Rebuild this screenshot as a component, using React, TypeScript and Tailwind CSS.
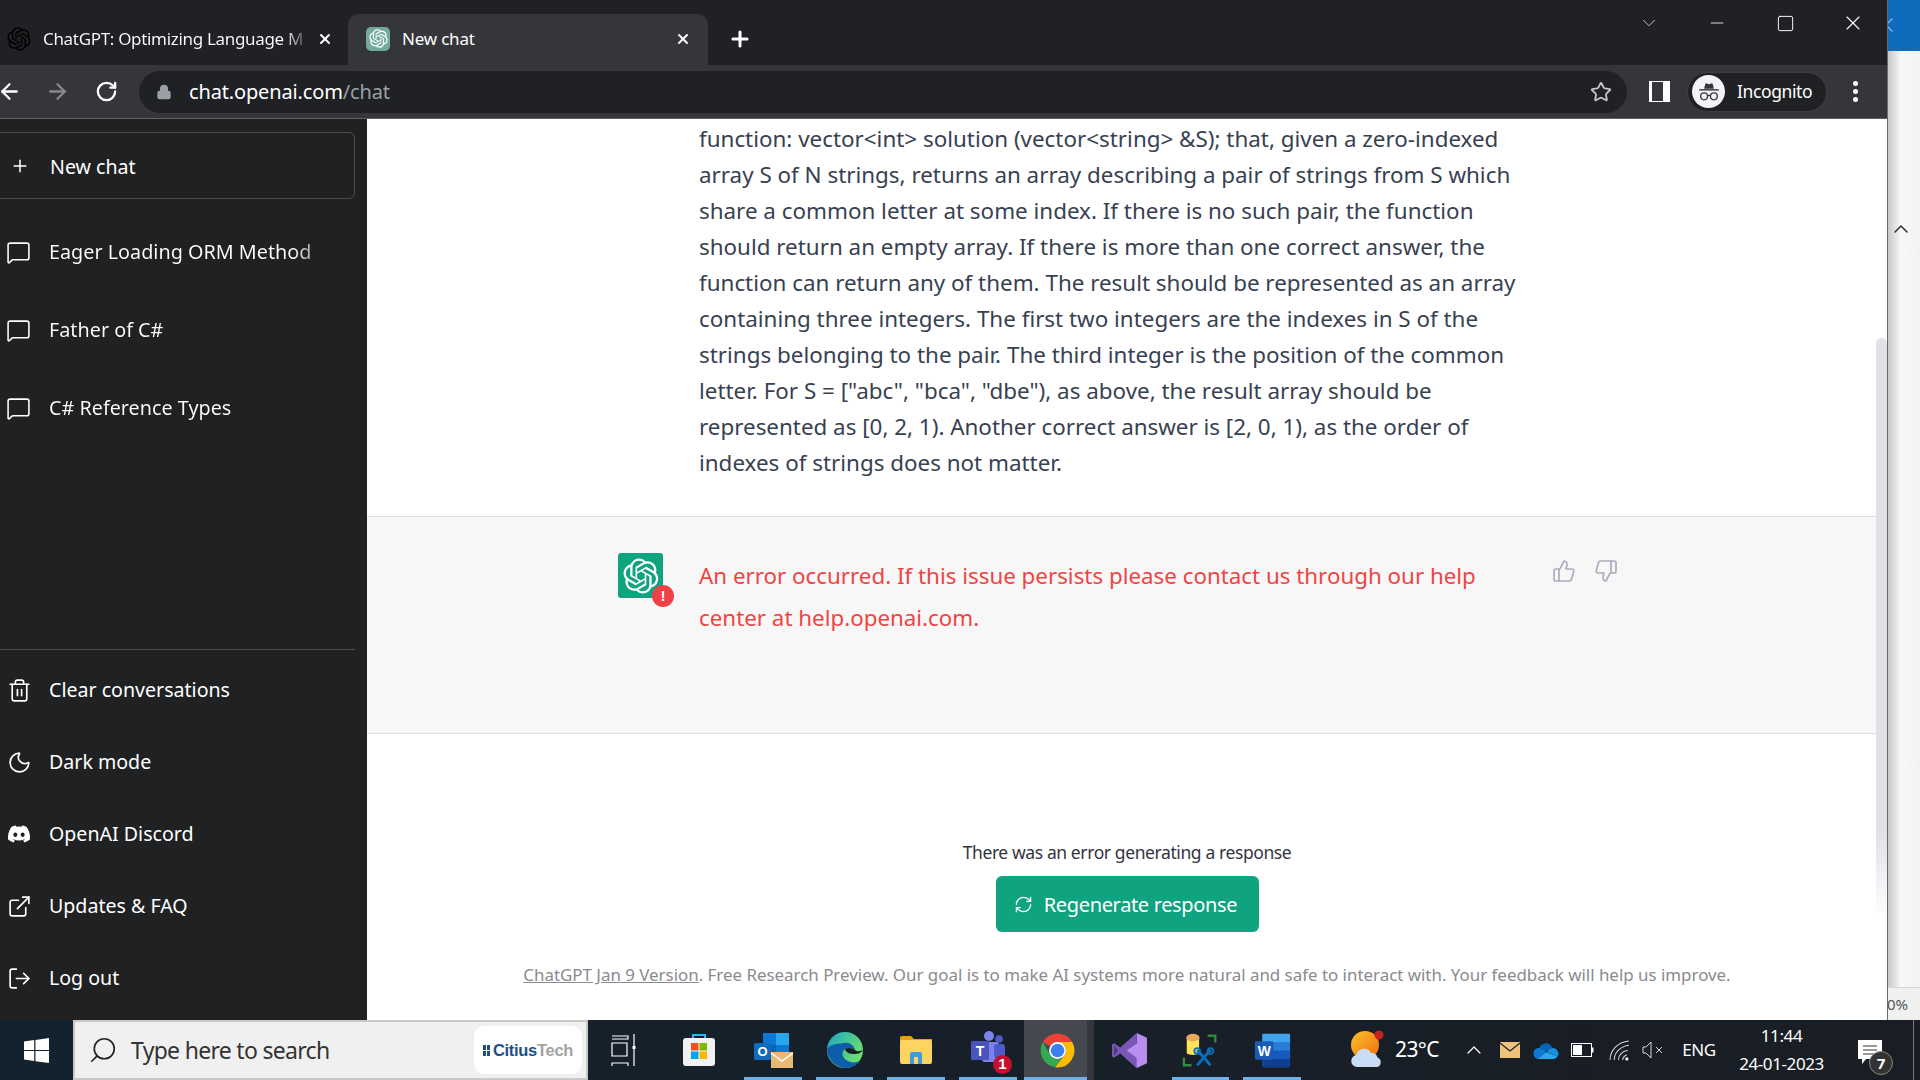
import { ReactNode } from 'react';
import {
  ArrowLeft,
  ArrowRight,
  ChevronDown,
  ChevronUp,
  ExternalLink,
  Lock,
  LogOut,
  MessageSquare,
  Minus,
  Moon,
  Plus,
  RefreshCw,
  RotateCw,
  Search,
  Square,
  Star,
  ThumbsDown,
  ThumbsUp,
  Trash2,
  X,
} from 'lucide-react';
import { FaDiscord } from 'react-icons/fa';

const ui = "font-['Noto_Sans',sans-serif]";

const promptLines = [
  'function: vector<int> solution (vector<string> &S); that, given a zero-indexed',
  'array S of N strings, returns an array describing a pair of strings from S which',
  'share a common letter at some index. If there is no such pair, the function',
  'should return an empty array. If there is more than one correct answer, the',
  'function can return any of them. The result should be represented as an array',
  'containing three integers. The first two integers are the indexes in S of the',
  'strings belonging to the pair. The third integer is the position of the common',
  'letter. For S = ["abc", "bca", "dbe"), as above, the result array should be',
  'represented as [0, 2, 1). Another correct answer is [2, 0, 1), as the order of',
  'indexes of strings does not matter.',
];

const chats = ['Eager Loading ORM Method', 'Father of C#', 'C# Reference Types'];

function OpenAILogo({ className }: { className?: string }) {
  return (
    <svg viewBox="0 0 41 41" fill="currentColor" className={className}>
      <path d="M37.5324 16.8707C37.9808 15.5241 38.1363 14.0974 37.9886 12.6859C37.8409 11.2744 37.3934 9.91076 36.676 8.68622C35.6126 6.83404 33.9882 5.3676 32.0373 4.4985C30.0864 3.62941 27.9098 3.40259 25.8215 3.85078C24.8796 2.7893 23.7219 1.94125 22.4257 1.36341C21.1295 0.785575 19.7249 0.491269 18.3058 0.500197C16.1708 0.495044 14.0893 1.16803 12.3614 2.42214C10.6335 3.67624 9.34853 5.44666 8.6917 7.47815C7.30085 7.76286 5.98686 8.3414 4.8377 9.17505C3.68854 10.0087 2.73073 11.0782 2.02839 12.312C0.956464 14.1591 0.498905 16.2988 0.721698 18.4228C0.944492 20.5467 1.83612 22.5449 3.268 24.1293C2.81966 25.4759 2.66413 26.9026 2.81182 28.3141C2.95951 29.7256 3.40701 31.0892 4.12437 32.3138C5.18791 34.1659 6.8123 35.6322 8.76321 36.5013C10.7141 37.3704 12.8907 37.5973 14.9789 37.1492C15.9208 38.2107 17.0786 39.0587 18.3747 39.6366C19.6709 40.2144 21.0755 40.5087 22.4946 40.4998C24.6307 40.5054 26.7133 39.8321 28.4418 38.5772C30.1704 37.3223 31.4556 35.5506 32.1119 33.5179C33.5027 33.2332 34.8167 32.6547 35.9659 31.821C37.115 30.9874 38.0728 29.9178 38.7752 28.684C39.8458 26.8371 40.3023 24.6979 40.0789 22.5748C39.8556 20.4517 38.9639 18.4544 37.5324 16.8707ZM22.4978 37.8849C20.7443 37.8874 19.0459 37.2733 17.6994 36.1501C17.7601 36.117 17.8666 36.0586 17.936 36.0161L25.9004 31.4156C26.1003 31.3019 26.2663 31.137 26.3813 30.9378C26.4964 30.7386 26.5563 30.5124 26.5549 30.2825V19.0542L29.9213 20.998C29.9389 21.0068 29.9541 21.0198 29.9656 21.0359C29.977 21.052 29.9842 21.0707 29.9867 21.0902V30.3889C29.9842 32.375 29.1946 34.2791 27.7909 35.6841C26.3872 37.0892 24.4838 37.8806 22.4978 37.8849ZM6.39227 31.0064C5.51397 29.4888 5.19742 27.7107 5.49804 25.9832C5.55718 26.0187 5.66048 26.0818 5.73461 26.1244L13.699 30.7248C13.8975 30.8408 14.1233 30.902 14.3532 30.902C14.583 30.902 14.8088 30.8408 15.0073 30.7248L24.731 25.1103V28.9979C24.7321 29.0177 24.7283 29.0376 24.7199 29.0556C24.7115 29.0736 24.6988 29.0893 24.6829 29.1012L16.6317 33.7497C14.9096 34.7416 12.8643 35.0097 10.9447 34.4954C9.02506 33.9811 7.38785 32.7263 6.39227 31.0064ZM4.29707 13.6194C5.17156 12.0998 6.55279 10.9364 8.19885 10.3327C8.19885 10.4013 8.19491 10.5228 8.19491 10.6071V19.808C8.19351 20.0378 8.25334 20.2638 8.36823 20.4629C8.48312 20.6619 8.64893 20.8267 8.84863 20.9404L18.5723 26.5542L15.206 28.4979C15.1894 28.5089 15.1703 28.5155 15.1505 28.5173C15.1307 28.5191 15.1107 28.516 15.0924 28.5082L7.04046 23.8557C5.32135 22.8601 4.06716 21.2235 3.55289 19.3046C3.03862 17.3858 3.30624 15.3413 4.29707 13.6194ZM31.955 20.0556L22.2312 14.4411L25.5976 12.4981C25.6142 12.4872 25.6333 12.4805 25.6531 12.4787C25.6729 12.4769 25.6928 12.4801 25.7111 12.4879L33.7631 17.1364C34.9967 17.849 36.0017 18.8982 36.6606 20.1613C37.3194 21.4244 37.6047 22.849 37.4832 24.2684C37.3617 25.6878 36.8382 27.0432 35.9743 28.1759C35.1103 29.3086 33.9415 30.1717 32.6047 30.6641C32.6047 30.5947 32.6047 30.4733 32.6047 30.3889V21.188C32.6066 20.9586 32.5474 20.7328 32.4332 20.5338C32.319 20.3348 32.154 20.1698 31.955 20.0556ZM35.3055 15.0128C35.2464 14.9765 35.1431 14.9142 35.069 14.8717L27.1045 10.2712C26.906 10.1554 26.6803 10.0943 26.4504 10.0943C26.2206 10.0943 25.9948 10.1554 25.7963 10.2712L16.0726 15.8858V11.9982C16.0715 11.9783 16.0753 11.9585 16.0837 11.9405C16.0921 11.9225 16.1048 11.9068 16.1207 11.8949L24.1719 7.25025C25.4053 6.53903 26.8158 6.19376 28.2383 6.25482C29.6608 6.31589 31.0364 6.78077 32.2044 7.59508C33.3723 8.40939 34.2842 9.53945 34.8334 10.8531C35.3826 12.1667 35.5464 13.6095 35.3055 15.0128ZM14.2424 21.9419L10.8752 19.9981C10.8576 19.9893 10.8423 19.9763 10.8309 19.9602C10.8195 19.9441 10.8122 19.9254 10.8098 19.9058V10.6071C10.8107 9.18295 11.2173 7.78848 11.9819 6.58696C12.7466 5.38544 13.8377 4.42659 15.1275 3.82264C16.4173 3.21869 17.8524 2.99464 19.2649 3.1767C20.6775 3.35876 22.0089 3.93941 23.1034 4.85067C23.0427 4.88379 22.937 4.94215 22.8668 4.98473L14.9024 9.58517C14.7025 9.69878 14.5366 9.86356 14.4215 10.0626C14.3065 10.2616 14.2466 10.4877 14.2479 10.7175L14.2424 21.9419ZM16.071 17.9991L20.4018 15.4978L24.7325 17.9975V22.9985L20.4018 25.4983L16.071 22.9985V17.9991Z" />
    </svg>
  );
}

function IncognitoGlyph() {
  return (
    <svg viewBox="0 0 24 24" className="h-[26px] w-[26px]" fill="none" stroke="#35363a">
      <path d="M7.500 9 8.600 4.500c.2-.7.8-.7 1.300-.4l2.100.8 2.100-.8c.5-.3 1.100-.3 1.300.4L16.500 9z" fill="#35363a" stroke="none" />
      <path d="M3 10h18" strokeWidth="1.300" />
      <circle cx="7.500" cy="16" r="3.200" strokeWidth="1.200" />
      <circle cx="16.500" cy="16" r="3.200" strokeWidth="1.200" />
      <path d="M10.700 15.500c.8-.5 1.800-.5 2.600 0" strokeWidth="1.200" />
    </svg>
  );
}

function StoreIcon() {
  return (
    <svg viewBox="0 0 36 36" className="h-[36px] w-[36px]">
      <path d="M12 6V3h12v3" fill="none" stroke="#29b6f6" strokeWidth="2" />
      <rect x="2" y="6" width="32" height="28" rx="3" fill="#f2f2f2" />
      <rect x="10" y="11" width="7.500" height="7.500" fill="#f25022" />
      <rect x="18.500" y="11" width="7.500" height="7.500" fill="#7fba00" />
      <rect x="10" y="19.500" width="7.500" height="7.500" fill="#00a4ef" />
      <rect x="18.500" y="19.500" width="7.500" height="7.500" fill="#ffb900" />
    </svg>
  );
}

function OutlookIcon() {
  return (
    <svg viewBox="0 0 40 40" className="h-[40px] w-[40px]">
      <rect x="10" y="3" width="26" height="24" fill="#0a78d4" />
      <rect x="23" y="3" width="13" height="12" fill="#28a8ea" />
      <rect x="10" y="15" width="13" height="12" fill="#0364b8" />
      <rect x="1" y="13" width="17" height="17" rx="1.500" fill="#0f6cbd" />
      <text x="9.500" y="26" textAnchor="middle" fontSize="13" fontWeight="700" fill="#fff" fontFamily="Liberation Sans">O</text>
      <rect x="18" y="22" width="22" height="16" fill="#e9b872" />
      <path d="M18 23l11 8 11-8" fill="none" stroke="#fff" strokeWidth="1.500" />
    </svg>
  );
}

function EdgeIcon() {
  return (
    <svg viewBox="0 0 38 38" className="h-[38px] w-[38px]">
      <defs>
        <linearGradient id="edgeTop" x1="0" y1="0" x2="1" y2="0.6">
          <stop offset="0" stopColor="#1ca7c9" />
          <stop offset="1" stopColor="#6fe06a" />
        </linearGradient>
      </defs>
      <circle cx="19" cy="19" r="18" fill="url(#edgeTop)" />
      <path d="M1 19C3 32 13 37 20 37c6 0 11-3 14-7-4 2-10 2-14-1-4-3-5-8-1-11 3-2 8-1 10 1-1-5-6-8-11-7C9 13 2 14 1 19z" fill="#0f5da8" />
      <path d="M19 18c3-2 8-1 10 1 3 3 8 0 8-1-1 4-5 5-9 5-4 0-8-1-9-5z" fill="#1a1d24" />
    </svg>
  );
}

function FolderIcon() {
  return (
    <svg viewBox="0 0 36 36" className="h-[36px] w-[36px]">
      <path d="M2 6a2 2 0 0 1 2-2h9l3 3h18v6H2z" fill="#e5a50a" />
      <rect x="2" y="8" width="32" height="24" rx="2" fill="#fcd462" />
      <path d="M12 32V22a2 2 0 0 1 2-2h8a2 2 0 0 1 2 2v10h-4v-7h-4v7z" fill="#3d9be0" />
    </svg>
  );
}

function TeamsIcon() {
  return (
    <div className="relative ml-[4px] h-[40px] w-[40px]">
      <svg viewBox="0 0 40 40" className="h-[40px] w-[40px]">
        <circle cx="19" cy="6" r="5" fill="#7b83eb" />
        <circle cx="29" cy="9" r="3.800" fill="#5059c9" />
        <rect x="12" y="12" width="17" height="20" rx="3" fill="#7b83eb" />
        <rect x="24" y="14" width="11" height="14" rx="3" fill="#5059c9" />
        <rect x="1" y="11" width="18" height="19" rx="1.500" fill="#4b53bc" />
        <text x="10" y="26" textAnchor="middle" fontSize="14" fontWeight="700" fill="#fff" fontFamily="Liberation Sans">T</text>
      </svg>
      <div className="absolute right-[-2px] bottom-[-4px] flex h-[19px] w-[19px] items-center justify-center rounded-full bg-[#c50f2f] font-['Liberation_Sans',sans-serif] text-[15px] font-bold text-white">
        1
      </div>
    </div>
  );
}

function ChromeIcon() {
  return (
    <svg viewBox="0 0 48 48" className="h-[37px] w-[37px]">
      <path d="M5 13A22 22 0 0 1 43 13H24A11 11 0 0 0 14.500 18.500z" fill="#ea4335" />
      <path d="M5 13A22 22 0 0 0 21 45.800L30 33.500A11 11 0 0 1 14.500 29.500z" fill="#34a853" />
      <path d="M43 13H24A11 11 0 0 1 33.500 29.500L21 45.800A22 22 0 0 0 43 13z" fill="#fbbc04" />
      <circle cx="24" cy="24" r="11" fill="#fff" />
      <circle cx="24" cy="24" r="8.800" fill="#3b82f0" />
    </svg>
  );
}

function VisualStudioIcon() {
  return (
    <svg viewBox="0 0 36 36" className="h-[37px] w-[37px]">
      <path d="M25 1l10 4.500v25L25 35 10 21l15-10z" fill="#b98ef0" />
      <path d="M25 1 9 15 3 11l-2 1.500v11L3 25l6-4 16 14V25L15 18l10-7z" fill="#7a56b8" />
      <path d="M3 13v10l4-5z" fill="#4f3a80" />
    </svg>
  );
}

function DbToolIcon() {
  return (
    <svg viewBox="0 0 40 40" className="h-[38px] w-[38px]">
      <path d="M27 5h8v7" fill="none" stroke="#2e8b3d" strokeWidth="2.500" />
      <path d="M2 28v8h8" fill="none" stroke="#2e8b3d" strokeWidth="2.500" />
      <path d="M5 7v16c0 3 13 3 13 0V7z" fill="#ffe25a" />
      <ellipse cx="11.500" cy="7" rx="7" ry="4" fill="#e6a85a" />
      <path d="M16 20l14 16M30 20 16 36" stroke="#0b6fb8" strokeWidth="3" />
      <circle cx="16" cy="21" r="3" fill="none" stroke="#0b6fb8" strokeWidth="2" />
      <circle cx="30" cy="21" r="3" fill="none" stroke="#0b6fb8" strokeWidth="2" />
    </svg>
  );
}

function WordIcon() {
  return (
    <svg viewBox="0 0 40 38" className="h-[37px] w-[37px]">
      <rect x="9" y="1" width="30" height="36" rx="2" fill="#2b7cd3" />
      <rect x="9" y="1" width="30" height="9" fill="#41a5ee" />
      <rect x="9" y="19" width="30" height="9" fill="#185abd" />
      <rect x="9" y="28" width="30" height="9" fill="#103f91" />
      <rect x="1" y="9" width="20" height="20" rx="1.500" fill="#1a5bb8" />
      <text x="11" y="24.500" textAnchor="middle" fontSize="15" fontWeight="700" fill="#fff" fontFamily="Liberation Sans">W</text>
    </svg>
  );
}

function WeatherIcon() {
  return (
    <svg viewBox="0 0 34 40" className="h-[40px] w-[34px]">
      <defs>
        <linearGradient id="sun" x1="0" y1="0" x2="1" y2="1">
          <stop offset="0" stopColor="#fcc22e" />
          <stop offset="1" stopColor="#ef6c0c" />
        </linearGradient>
      </defs>
      <circle cx="15" cy="15" r="14" fill="url(#sun)" />
      <circle cx="29" cy="5" r="4.500" fill="#c4201c" />
      <path d="M7 37a6 6 0 0 1-.8-11.900A8 8 0 0 1 21 23a6 6 0 0 1 6.500 4.500A5 5 0 0 1 27 37z" fill="#c9dcf5" />
    </svg>
  );
}

function OneDriveIcon() {
  return (
    <svg viewBox="0 0 26 18" className="h-[18px] w-[26px]">
      <path d="M6 8a7 7 0 0 1 13-2 5 5 0 0 1 0 1L10 12z" fill="#0364b8" />
      <path d="M6 18a5.500 5.500 0 0 1-1-10.900c1-.2 2 0 3 .4l5 3L6 18z" fill="#0f78d4" />
      <path d="M20 7a5.500 5.500 0 0 1 4.500 8.500L14 11c1-2 3-4 6-4z" fill="#1490df" />
      <path d="M5 18l8-7 11.500 4.500A5 5 0 0 1 20 18z" fill="#28a8ea" />
    </svg>
  );
}

function ChromeButton({ children }: { children: ReactNode }) {
  return <div className="flex h-full w-[68px] items-center justify-center">{children}</div>;
}

function SideRow({ icon, label }: { icon: ReactNode; label: string }) {
  return (
    <div className="flex h-[72px] items-center pl-[6px]">
      <div className="flex w-[26px] shrink-0 justify-center text-white">{icon}</div>
      <span className="ml-[17px] text-[19.600px] text-white">{label}</span>
    </div>
  );
}

function TaskSlot({ width, icon, underline, active }: { width: string; icon: ReactNode; underline?: boolean; active?: boolean }) {
  return (
    <div className={`relative flex h-full shrink-0 items-center justify-center ${width} ${active ? 'border-r-[7px] border-[#33363c] bg-[#45484f] pl-[4px]' : ''}`}>
      {icon}
      {underline && <div className={`absolute bottom-0 h-[3px] bg-[#6cb2e8] ${active ? 'inset-x-0' : 'inset-x-[7px]'}`} />}
    </div>
  );
}

export default function App() {
  return (
    <div className={`flex h-[1080px] w-[1920px] flex-col overflow-hidden bg-white ${ui}`}>
      <div className="flex h-[1020px] shrink-0">
        {/* Browser window */}
        <div className="flex w-[1887px] shrink-0 flex-col">
          <div className="flex h-[65px] shrink-0 items-end bg-[#202124] text-white">
            <div className="flex h-[51px] w-[348px] shrink-0 items-center pb-[2px] pl-[7px]">
              <OpenAILogo className="h-[24px] w-[24px] text-black" />
              <span className="ml-[12px] w-[268px] truncate bg-gradient-to-r from-white from-[90%] to-transparent bg-clip-text text-[17px] tracking-[-0.32px] whitespace-nowrap text-transparent">
                ChatGPT: Optimizing Language M
              </span>
              <X className="ml-[6px] h-[16px] w-[16px]" strokeWidth={3} />
            </div>
            <div className="flex h-[51px] w-[360px] shrink-0 items-center rounded-t-[10px] bg-[#35363a] pb-[2px] pl-[18px]">
              <div className="flex h-[24px] w-[24px] items-center justify-center rounded-[5px] bg-[#74aa9c]">
                <OpenAILogo className="h-[19px] w-[19px] text-white" />
              </div>
              <span className="ml-[12px] w-[273px] text-[17px] tracking-[-0.2px]">New chat</span>
              <X className="h-[16px] w-[16px]" strokeWidth={3} />
            </div>
            <div className="flex h-[51px] w-[64px] shrink-0 items-center justify-center pb-[2px]">
              <Plus className="h-[24px] w-[24px]" strokeWidth={3} />
            </div>
            <div className="ml-auto flex h-[46px] self-start">
              <ChromeButton>
                <ChevronDown className="h-[22px] w-[22px] text-[#d0d0d0]" strokeWidth={1} />
              </ChromeButton>
              <ChromeButton>
                <Minus className="h-[20px] w-[20px]" strokeWidth={1} />
              </ChromeButton>
              <ChromeButton>
                <Square className="h-[19px] w-[19px]" strokeWidth={1.2} />
              </ChromeButton>
              <ChromeButton>
                <X className="h-[24px] w-[24px]" strokeWidth={1.1} />
              </ChromeButton>
            </div>
          </div>
          <div className="flex h-[54px] shrink-0 items-center border-b border-[#5f6063] bg-[#35363a] text-white">
            <ArrowLeft className="ml-[-3px] h-[25px] w-[25px] shrink-0" strokeWidth={2.2} />
            <ArrowRight className="ml-[23px] h-[25px] w-[25px] shrink-0 text-[#86888b]" strokeWidth={2.2} />
            <RotateCw className="ml-[25px] h-[23px] w-[23px] shrink-0" strokeWidth={2.4} />
            <div className="ml-[21px] flex h-[42px] w-[1488px] shrink-0 items-center rounded-full bg-[#202124] pl-[17px]">
              <Lock className="h-[16px] w-[16px] fill-[#9aa0a6] text-[#9aa0a6]" />
              <span className="ml-[17px] text-[20px] tracking-[-0.15px]">
                chat.openai.com<span className="text-[#9aa0a6]">/chat</span>
              </span>
              <Star className="mr-[15px] ml-auto h-[22px] w-[22px] text-[#c4c7c5]" strokeWidth={2} />
            </div>
            <div className="ml-[22px] h-[21px] w-[21px] shrink-0 border-y-[1px] border-r-[7px] border-l-[3px] border-white bg-[#35363a]" />
            <div className="ml-[17px] flex h-[40px] w-[140px] shrink-0 items-center rounded-full border border-[#3d3e42] bg-[#202124] pl-[4px]">
              <div className="flex h-[33px] w-[33px] items-center justify-center rounded-full bg-[#f1f3f4]">
                <IncognitoGlyph />
              </div>
              <span className="ml-[12px] text-[17.500px] tracking-[-0.4px]">Incognito</span>
            </div>
            <div className="ml-[26px] flex flex-col gap-[3px]">
              <div className="h-[5px] w-[5px] rounded-full bg-white" />
              <div className="h-[5px] w-[5px] rounded-full bg-white" />
              <div className="h-[5px] w-[5px] rounded-full bg-white" />
            </div>
          </div>

          <div className="flex min-h-0 flex-1">
            {/* Sidebar */}
            <aside className="flex w-[367px] shrink-0 flex-col bg-[#202123] pt-[13px] pb-[6px]">
              <div className="ml-[-10px] flex h-[67px] w-[365px] shrink-0 items-center rounded-md border border-white/20 pl-[19px] text-white">
                <Plus className="h-[20px] w-[20px]" strokeWidth={1.8} />
                <span className="ml-[20px] pt-[2px] text-[19.600px]">New chat</span>
              </div>
              <div className="mt-[14px] flex flex-col">
                {chats.map((title) => (
                  <div key={title} className="flex h-[78px] items-center pl-[6px]">
                    <MessageSquare className="h-[25px] w-[25px] shrink-0 text-white" strokeWidth={1.5} />
                    <span className="ml-[18px] w-[270px] truncate bg-gradient-to-r from-white from-[90%] to-[#8a8a8a] bg-clip-text text-[19.800px] whitespace-nowrap text-transparent">
                      {title}
                    </span>
                  </div>
                ))}
              </div>
              <div className="mt-auto w-[355px] border-t border-white/20 pt-[4px]">
                <SideRow icon={<Trash2 className="h-[25px] w-[25px]" strokeWidth={1.6} />} label="Clear conversations" />
                <SideRow icon={<Moon className="h-[25px] w-[25px]" strokeWidth={1.6} />} label="Dark mode" />
                <SideRow icon={<FaDiscord className="h-[24px] w-[24px]" />} label="OpenAI Discord" />
                <SideRow icon={<ExternalLink className="h-[25px] w-[25px]" strokeWidth={1.6} />} label="Updates & FAQ" />
                <SideRow icon={<LogOut className="h-[25px] w-[25px]" strokeWidth={1.6} />} label="Log out" />
              </div>
            </aside>

            {/* Conversation */}
            <main className="relative flex min-w-0 flex-1 flex-col bg-white">
              <div className="pt-[2px] pr-[10px] pb-[35px] pl-[332px] text-[22.400px] leading-[36px] text-[#374151]">
                {promptLines.map((line) => (
                  <div key={line} className="whitespace-nowrap">
                    {line}
                  </div>
                ))}
              </div>
              <div className="mr-[10px] flex h-[218px] shrink-0 border-y border-black/10 bg-[#f7f7f8] pt-[36px] pl-[251px]">
                <div className="relative h-[45px] w-[45px] shrink-0">
                  <div className="flex h-[45px] w-[45px] items-center justify-center rounded-[3px] bg-[#10a37f]">
                    <OpenAILogo className="h-[36px] w-[36px] text-white" />
                  </div>
                  <div className="absolute right-[-11px] bottom-[-9px] flex h-[22px] w-[22px] items-center justify-center rounded-full bg-[#ef4146] font-['Liberation_Sans',sans-serif] text-[14px] font-bold text-white">
                    !
                  </div>
                </div>
                <div className="mt-[2px] ml-[36px] w-[823px] text-[22.350px] leading-[42px] text-[#ef4444]">
                  <div className="whitespace-nowrap">An error occurred. If this issue persists please contact us through our help</div>
                  <div className="whitespace-nowrap">center at help.openai.com.</div>
                </div>
                <div className="mt-[6px] ml-[30px] flex gap-[18px] text-[#acacbe]">
                  <ThumbsUp className="h-[24px] w-[24px]" strokeWidth={1.7} />
                  <ThumbsDown className="h-[24px] w-[24px]" strokeWidth={1.7} />
                </div>
              </div>
              <div className="flex flex-col items-center">
                <div className="mt-[106px] text-[17.500px] leading-[24px] tracking-[-0.4px] text-[#343541]">There was an error generating a response</div>
                <div className="mt-[12px] flex h-[56px] w-[263px] items-center justify-center rounded-md bg-[#10a37f] pt-[1px] text-white">
                  <RefreshCw className="ml-[-3px] h-[19px] w-[19px]" strokeWidth={1.6} />
                  <span className="ml-[11px] text-[20px] tracking-[-0.35px]">Regenerate response</span>
                </div>
                <div className="mt-[33px] text-[16.900px] leading-[20px] whitespace-nowrap text-[#8a8a90]">
                  <span className="underline">ChatGPT Jan 9 Version</span>. Free Research Preview. Our goal is to make AI systems more natural and safe to interact with. Your feedback will help us improve.
                </div>
              </div>
              {/* scrollbar thumb */}
              <div className="absolute top-[219px] right-0 h-[582px] w-[11px] rounded-t-[6px] bg-gradient-to-b from-[#e0e1e9] from-[85%] to-white" />
            </main>
          </div>
        </div>

        {/* Sliver of the window behind */}
        <div className="flex min-w-0 flex-1 flex-col border-l border-[#6a6a6a] bg-gradient-to-r from-[#c8c8c8] from-0% via-[#f8f8f8] via-40% to-[#f2f2f2]">
          <div className="h-[51px] shrink-0 overflow-hidden bg-[#0f6cbd] text-[#8ec1ec]">
            <X className="ml-[-14px] mt-[13px] h-[24px] w-[24px]" strokeWidth={1.2} />
          </div>
          <ChevronUp className="mt-[166px] ml-[1px] h-[24px] w-[24px] text-[#333]" strokeWidth={1.5} />
          <div className="mt-auto flex h-[33px] items-center overflow-hidden border-t border-[#d5d5d5] bg-[#f0f0f0] text-[15px] text-[#555]">
            <span className="ml-[-1px]">0%</span>
          </div>
        </div>
      </div>

      {/* Taskbar */}
      <div className="flex h-[60px] shrink-0 items-center bg-gradient-to-r from-[#13222f] to-[#1a1d24] text-white">
        <div className="flex h-full w-[73px] shrink-0 items-center justify-center">
          <svg viewBox="0 0 24 24" className="h-[25px] w-[25px]" fill="#fff">
            <path d="M0 3.400 9.800 2v9.500H0zM11 1.800 24 0v11.500H11zM0 12.500h9.800V22L0 20.600zM11 12.500h13V24L11 22.200z" />
          </svg>
        </div>
        <div className="flex h-full w-[515px] shrink-0 items-center border-2 border-[#c8c8c8] bg-[#f0f0f0] pl-[13px] text-[#333]">
          <Search className="h-[30px] w-[30px] -scale-x-100 text-[#222]" strokeWidth={1.3} />
          <span className="ml-[13px] text-[23px] tracking-[-0.7px]">Type here to search</span>
          <div className="ml-auto mr-[4px] flex h-[48px] w-[108px] items-center justify-center rounded-[10px] bg-white font-['Liberation_Sans',sans-serif] text-[16.500px] font-bold tracking-[-0.3px]">
            <div className="mr-[3px] grid grid-cols-2 gap-[1px]">
              <div className="h-[5px] w-[3px] bg-[#1d4f85]" />
              <div className="h-[5px] w-[3px] bg-[#1d4f85]" />
              <div className="h-[5px] w-[3px] bg-[#1d4f85]" />
              <div className="h-[5px] w-[3px] bg-[#1d4f85]" />
            </div>
            <span className="text-[#1d4f85]">Citius</span>
            <span className="text-[#a3a3a3]">Tech</span>
          </div>
        </div>
        <TaskSlot
          width="w-[72px]"
          icon={
            <svg viewBox="0 0 26 34" className="h-[34px] w-[26px]" fill="none" stroke="#fff" strokeWidth="1.200">
              <path d="M1 3h16v3H1M1 10h15v13H1zM1 33v-3h16v3M23 1v32" />
              <rect x="21.500" y="13" width="3" height="3" fill="#fff" stroke="none" />
            </svg>
          }
        />
        <TaskSlot width="w-[77px]" icon={<StoreIcon />} />
        <TaskSlot width="w-[72px]" icon={<OutlookIcon />} underline />
        <TaskSlot width="w-[71px]" icon={<EdgeIcon />} underline />
        <TaskSlot width="w-[72px]" icon={<FolderIcon />} underline />
        <TaskSlot width="w-[72px]" icon={<TeamsIcon />} underline />
        <TaskSlot width="w-[70px]" icon={<ChromeIcon />} underline active />
        <TaskSlot width="w-[71px]" icon={<VisualStudioIcon />} />
        <TaskSlot width="w-[71px]" icon={<DbToolIcon />} underline />
        <TaskSlot width="w-[72px]" icon={<WordIcon />} underline />

        <div className="ml-[42px] shrink-0">
          <WeatherIcon />
        </div>
        <span className="ml-[11px] w-[61px] shrink-0 text-[21px] tracking-[-0.6px]">23°C</span>
        <div className="flex w-[36px] shrink-0 justify-center">
          <ChevronUp className="h-[24px] w-[24px]" strokeWidth={1.2} />
        </div>
        <div className="flex w-[36px] shrink-0 justify-center">
          <svg viewBox="0 0 20 16" className="h-[16px] w-[20px]">
            <rect width="20" height="16" fill="#eec27a" />
            <path d="M0 1l10 8 10-8" fill="none" stroke="#1a1d24" strokeWidth="1.200" />
          </svg>
        </div>
        <div className="flex w-[36px] shrink-0 justify-center">
          <OneDriveIcon />
        </div>
        <div className="flex w-[37px] shrink-0 justify-center">
          <svg viewBox="0 0 24 14" className="h-[14px] w-[24px]">
            <rect x="0.500" y="0.500" width="20" height="13" fill="none" stroke="#fff" />
            <rect x="2" y="2" width="9" height="10" fill="#fff" />
            <rect x="21" y="4.500" width="1.500" height="5" fill="#fff" />
          </svg>
        </div>
        <div className="flex w-[37px] shrink-0 justify-center">
          <svg viewBox="0 0 20 20" className="h-[21px] w-[21px]" fill="none" stroke="#d5d5d5" strokeWidth="1">
            <path d="M1 19C1 10 8 2 19 1M5 19C5 12 11 6 19 5M9 19c0-5 4-9 9-9M13 19c0-2 2-4 4-5" />
            <circle cx="17" cy="18" r="1.500" fill="#fff" stroke="none" />
          </svg>
        </div>
        <div className="flex w-[30px] shrink-0 justify-center">
          <svg viewBox="0 0 22 20" className="h-[20px] w-[22px]" fill="none" stroke="#d5d5d5" strokeWidth="1">
            <path d="M1 7h3l5-5v16l-5-5H1zM14 7l6 6M20 7l-6 6" />
          </svg>
        </div>
        <span className="flex w-[62px] shrink-0 justify-center text-[17px] tracking-[-0.4px]">ENG</span>
        <div className="flex w-[103px] shrink-0 flex-col items-center text-[17px] leading-[28px] tracking-[-0.4px]">
          <span>11:44</span>
          <span>24-01-2023</span>
        </div>
        <div className="relative ml-[25px] h-[20px] w-[24px] shrink-0">
          <svg viewBox="0 0 24 24" className="h-[24px] w-[24px]" fill="#fff">
            <path d="M0 0h24v19H8l-4 5v-5H0z" />
            <path d="M5 6h14M5 10h14M5 14h14" stroke="#333" strokeWidth="1" />
          </svg>
          <div className="absolute top-[11px] left-[11px] flex h-[24px] w-[24px] items-center justify-center rounded-full border border-[#888] bg-[#333] text-[15px] font-bold">
            7
          </div>
        </div>
        <div className="ml-auto mr-[6px] h-full w-[1px] bg-[#777]" />
      </div>
    </div>
  );
}
